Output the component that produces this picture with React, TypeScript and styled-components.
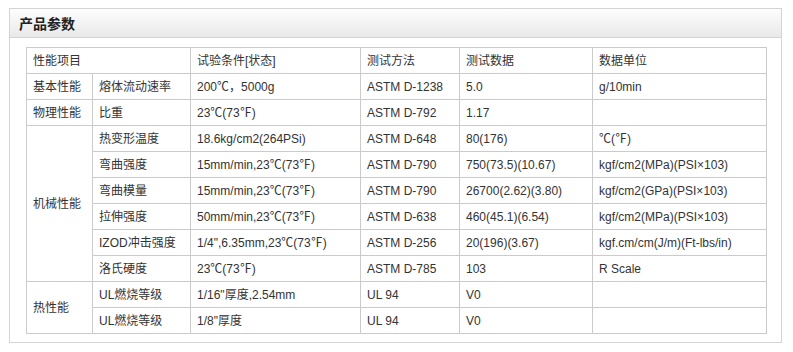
import React from "react";
import styled, { createGlobalStyle } from "styled-components";

const GlobalStyle = createGlobalStyle`
  body {
    margin: 0;
    background: #fff;
    font-family: "Liberation Sans", "Noto Sans CJK SC", sans-serif;
    color: #333;
  }
`;

const Panel = styled.div`
  margin: 8px 0 0 9px;
  width: 773px;
  border: 1px solid #d4d4d4;
  box-sizing: border-box;
  padding-bottom: 8px;
`;

const PanelHead = styled.div`
  height: 28px;
  display: flex;
  align-items: center;
  padding-left: 9px;
  background: linear-gradient(to bottom, #fdfdfd, #e9e9e9);
  border-bottom: 1px solid #d4d4d4;
  font-size: 14px;
  font-weight: bold;
  color: #222;
`;

const Body = styled.div`
  padding: 9px 0 0 16px;
`;

const Table = styled.table`
  border-collapse: collapse;
  table-layout: fixed;
  width: 740px;
  font-size: 12px;
`;

const Cell = styled.td`
  border: 1px solid #cbcbcb;
  height: 26px;
  padding: 0 0 0 6px;
  box-sizing: border-box;
  vertical-align: middle;
  white-space: nowrap;
  line-height: 14px;
`;

type Row = { group?: string; span?: number; item?: string; cond: string; method: string; data: string; unit: string };

const rows: Row[] = [
  { group: "基本性能", span: 1, item: "熔体流动速率", cond: "200℃，5000g", method: "ASTM D-1238", data: "5.0", unit: "g/10min" },
  { group: "物理性能", span: 1, item: "比重", cond: "23℃(73℉)", method: "ASTM D-792", data: "1.17", unit: "" },
  { group: "机械性能", span: 6, item: "热变形温度", cond: "18.6kg/cm2(264PSi)", method: "ASTM D-648", data: "80(176)", unit: "℃(℉)" },
  { item: "弯曲强度", cond: "15mm/min,23℃(73℉)", method: "ASTM D-790", data: "750(73.5)(10.67)", unit: "kgf/cm2(MPa)(PSI×103)" },
  { item: "弯曲模量", cond: "15mm/min,23℃(73℉)", method: "ASTM D-790", data: "26700(2.62)(3.80)", unit: "kgf/cm2(GPa)(PSI×103)" },
  { item: "拉伸强度", cond: "50mm/min,23℃(73℉)", method: "ASTM D-638", data: "460(45.1)(6.54)", unit: "kgf/cm2(MPa)(PSI×103)" },
  { item: "IZOD冲击强度", cond: "1/4\",6.35mm,23℃(73℉)", method: "ASTM D-256", data: "20(196)(3.67)", unit: "kgf.cm/cm(J/m)(Ft-lbs/in)" },
  { item: "洛氏硬度", cond: "23℃(73℉)", method: "ASTM D-785", data: "103", unit: "R Scale" },
  { group: "热性能", span: 2, item: "UL燃烧等级", cond: "1/16\"厚度,2.54mm", method: "UL 94", data: "V0", unit: "" },
  { item: "UL燃烧等级", cond: "1/8\"厚度", method: "UL 94", data: "V0", unit: "" },
];

const App = () => {
  return (
    <>
      <GlobalStyle />
      <Panel>
        <PanelHead>产品参数</PanelHead>
        <Body>
          <Table>
            <colgroup>
              <col style={{ width: 66 }} />
              <col style={{ width: 98 }} />
              <col style={{ width: 170 }} />
              <col style={{ width: 99 }} />
              <col style={{ width: 133 }} />
              <col style={{ width: 174 }} />
            </colgroup>
            <tbody>
              <tr>
                <Cell colSpan={2}>性能项目</Cell>
                <Cell>试验条件[状态]</Cell>
                <Cell>测试方法</Cell>
                <Cell>测试数据</Cell>
                <Cell>数据单位</Cell>
              </tr>
              {rows.map((r, i) => (
                <tr key={i}>
                  {r.group && <Cell rowSpan={r.span}>{r.group}</Cell>}
                  <Cell>{r.item}</Cell>
                  <Cell>{r.cond}</Cell>
                  <Cell>{r.method}</Cell>
                  <Cell>{r.data}</Cell>
                  <Cell>{r.unit}</Cell>
                </tr>
              ))}
            </tbody>
          </Table>
        </Body>
      </Panel>
    </>
  );
};

export default App;
